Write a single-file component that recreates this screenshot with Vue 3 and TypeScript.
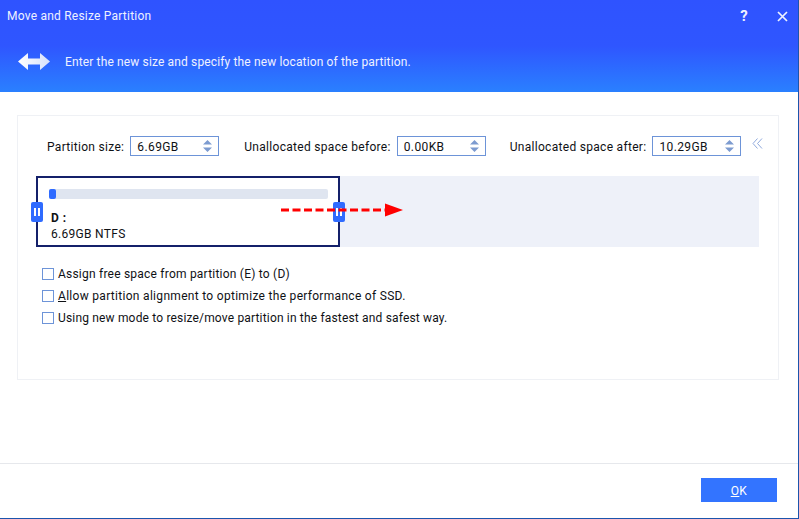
<script setup lang="ts">
const sizes = [
  { label: 'Partition size:', value: '6.69GB', cls: 'f1' },
  { label: 'Unallocated space before:', value: '0.00KB', cls: 'f2' },
  { label: 'Unallocated space after:', value: '10.29GB', cls: 'f3' },
]
</script>

<template>
  <div class="win">
    <header class="head">
      <div class="titlebar">
        <span class="title">Move and Resize Partition</span>
        <span class="help">?</span>
        <svg class="close" width="11" height="11" viewBox="0 0 11 11"><path d="M1 1l9 9M10 1l-9 9" stroke="#eef2ff" stroke-width="1.7" fill="none" /></svg>
      </div>
      <div class="banner">
        <svg class="bicon" width="32" height="20" viewBox="0 0 32 20">
          <defs><linearGradient id="g" x1="0" x2="1" y1="0" y2="0"><stop offset="0" stop-color="#ffffff" /><stop offset="1" stop-color="#d5e0fb" /></linearGradient></defs>
          <path d="M0 9.5L10 1v5.5h12V1l10 8.5L22 18v-5.5H10V18z" fill="url(#g)" />
        </svg>
        <span class="bannertext">Enter the new size and specify the new location of the partition.</span>
      </div>
    </header>

    <main class="body">
      <section class="panel">
        <div class="fields">
          <div v-for="s in sizes" :key="s.label" class="field" :class="s.cls">
            <label>{{ s.label }}</label>
            <div class="spin">
              <span>{{ s.value }}</span>
              <svg width="9" height="14" viewBox="0 0 9 14"><path d="M4.5 1L9 5.5H0zM0 8.5H9L4.5 13z" fill="#7d9bd0" /></svg>
            </div>
          </div>
          <svg class="chev" width="11" height="11" viewBox="0 0 11 11"><path d="M5.5 0.5L1 5.5l4.5 5M10 0.5L5.5 5.5l4.5 5" stroke="#8fa9dc" stroke-width="1" fill="none" /></svg>
        </div>

        <div class="disk">
          <div class="sel">
            <div class="bar"><div class="fill"></div></div>
            <div class="drive">D :</div>
            <div class="info">6.69GB NTFS</div>
            <span class="grip left"><i></i><i></i></span>
            <span class="grip right"><i></i><i></i></span>
          </div>
          <svg class="arrow" width="122" height="14" viewBox="0 0 122 14">
            <path d="M0 7H104" stroke="#ff0000" stroke-width="3" stroke-dasharray="8 3.5" fill="none" />
            <path d="M104 0.5L122 7L104 13.5z" fill="#ff0000" />
          </svg>
        </div>

        <div class="checks">
          <label class="chk l1"><i class="box"></i><span>Assign free space from partition (E) to (D)</span></label>
          <label class="chk l2"><i class="box"></i><span><u>A</u>llow partition alignment to optimize the performance of SSD.</span></label>
          <label class="chk"><i class="box"></i><span>Using new mode to resize/move partition in the fastest and safest way.</span></label>
        </div>
      </section>
    </main>

    <footer class="foot">
      <button class="ok"><u>O</u>K</button>
    </footer>
  </div>
</template>

<style>
html, body { margin: 0; background: #fff; }
</style>

<style scoped>
.win {
  width: 799px;
  height: 519px;
  box-sizing: border-box;
  border-right: 1px solid #1b55ad;
  border-bottom: 1px solid #1b55ad;
  display: flex;
  flex-direction: column;
  font-family: Roboto, "Liberation Sans", sans-serif;
  font-size: 12px;
  color: #0f1115;
  background: #fff;
  overflow: hidden;
}
.head {
  height: 92px;
  flex: none;
  background: linear-gradient(180deg, #2f53ff 0%, #2f56ff 50%, #2a80ff 100%);
  color: #eef2ff;
}
.titlebar {
  height: 32px;
  display: flex;
  align-items: center;
  padding-left: 7px;
}
.title { font-size: 12px; letter-spacing: 0.22px; flex: 1; }
.help { font-size: 15px; font-weight: 700; width: 12px; text-align: center; margin-right: 27px; }
.close { margin-right: 10px; }
.banner {
  display: flex;
  align-items: center;
  height: 60px;
  padding: 0 0 1px 18px;
  box-sizing: border-box;
}
.bannertext { margin-left: 15px; font-size: 12px; letter-spacing: 0.14px; padding-top: 1px; }
.body { flex: 1; padding: 23px 19px 0 17px; }
.panel {
  height: 265px;
  box-sizing: border-box;
  border: 1px solid #eff1f5;
  padding: 20px 19px 0 19px;
}
.fields { display: flex; height: 20px; align-items: center; padding-left: 10px; }
.field { display: flex; align-items: center; flex: none; }
.field label { margin-right: 6px; letter-spacing: 0.3px; white-space: nowrap; padding-top: 1px; }
.f2 { margin-left: 25px; }
.f3 { margin-left: 24px; }
.spin {
  width: 89px;
  height: 20px;
  box-sizing: border-box;
  border: 1px solid #6d94d8;
  display: flex;
  align-items: center;
  justify-content: space-between;
  padding: 0 6px 0 6px;
  letter-spacing: 0.4px;
}
.spin span { padding-top: 1px; }
.chev { flex: none; margin-left: 11px; margin-top: -5px; }
.disk {
  position: relative;
  margin-top: 20px;
  height: 71px;
  background: #eef1f9;
  width: 722px;
}
.sel {
  position: relative;
  width: 304px;
  height: 71px;
  box-sizing: border-box;
  border: 2px solid #14206a;
  background: #fff;
  padding: 11px 10px 0 11px;
  margin-left: -1px;
}
.bar { height: 10px; background: #dfe5f0; border-radius: 2px; }
.fill { width: 7px; height: 10px; background: #2f6bff; border-radius: 2px; }
.drive { font-weight: 700; margin-top: 12px; line-height: 14px; padding-left: 2px; letter-spacing: 0.5px; }
.info { line-height: 14px; margin-top: 2px; padding-left: 2px; letter-spacing: 0.3px; }
.grip {
  position: absolute;
  top: 24px;
  width: 12px;
  height: 20px;
  background: #2f6bff;
  border-radius: 2px;
  display: flex;
  align-items: center;
  justify-content: center;
  gap: 2px;
}
.grip i { width: 2px; height: 8px; background: #fff; }
.grip.left { left: -7px; }
.grip.right { right: -7px; }
.arrow { position: absolute; left: 244px; top: 27px; }
.checks { margin-top: 20px; padding-left: 5px; display: flex; flex-direction: column; gap: 8px; }
.chk { display: flex; align-items: center; height: 14px; letter-spacing: 0.17px; white-space: nowrap; }
.l1 { letter-spacing: 0.22px; }
.l2 { letter-spacing: 0.3px; }
.box {
  width: 12px;
  height: 12px;
  box-sizing: border-box;
  border: 1px solid #6d94d8;
  margin-right: 4px;
  flex: none;
}
.foot {
  height: 55px;
  box-sizing: border-box;
  flex: none;
  border-top: 1px solid #e6e8ec;
  display: flex;
  justify-content: flex-end;
  align-items: flex-start;
  padding: 14px 21px 0 0;
}
.ok {
  width: 76px;
  height: 24px;
  border: none;
  background: #3374ff;
  color: #fff;
  font-family: inherit;
  font-size: 12px;
  letter-spacing: 0.4px;
  padding: 1px 0 0;
}
</style>
